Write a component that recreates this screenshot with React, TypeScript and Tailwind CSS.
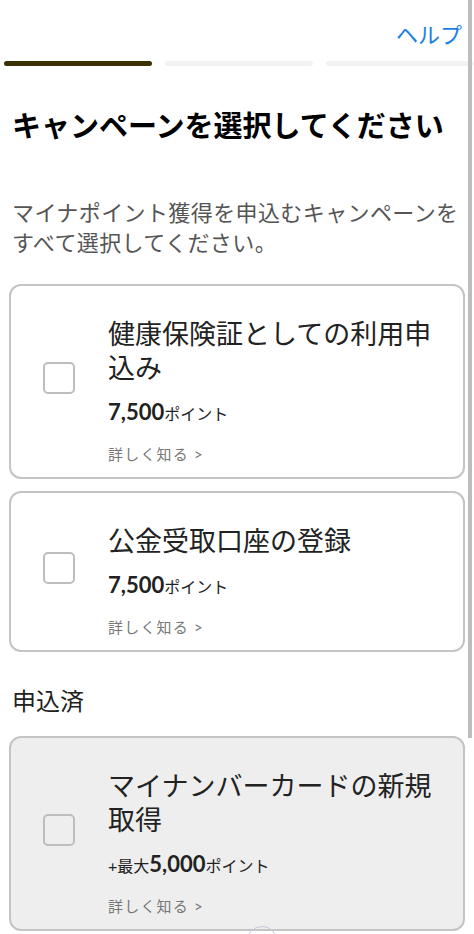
import React from "react";

type Campaign = {
  title: string;
  prefix?: string;
  points: string;
  done?: boolean;
};

const open: Campaign[] = [
  { title: "健康保険証としての利用申込み", points: "7,500" },
  { title: "公金受取口座の登録", points: "7,500" },
];

const applied: Campaign[] = [
  { title: "マイナンバーカードの新規取得", prefix: "+最大", points: "5,000", done: true },
];

function CampaignCard({ c }: { c: Campaign }) {
  return (
    <div
      className={
        "flex items-center rounded-[12px] border-2 border-[#c4c4c4] pl-[32px] pr-[20px] pt-[31px] pb-[12px] " +
        (c.done ? "bg-[#eeeeee]" : "bg-white")
      }
    >
      <div className="mb-[27px] h-[32px] w-[32px] shrink-0 rounded-[5px] border-2 border-[#bdbdbd] bg-transparent" />
      <div className="ml-[33px] flex flex-col">
        <div className="text-[27px] leading-[34px] text-[#222]">{c.title}</div>
        <div className="mt-[12px] flex items-baseline text-[#222]">
          {c.prefix && <span className="text-[16px]">{c.prefix}</span>}
          <span className="text-[22px] font-bold leading-[30px]">{c.points}</span>
          <span className="text-[16px]">ポイント</span>
        </div>
        <div className="mt-[16px] text-[15px] leading-[22px] tracking-[1.2px] text-[#777]">詳しく知る &gt;</div>
      </div>
    </div>
  );
}

export default function App() {
  return (
    <div
      className="relative min-h-[934px] w-full overflow-hidden bg-white"
      style={{ fontFamily: "Lato, 'Noto Sans CJK JP', 'Noto Sans', sans-serif" }}
    >
      <div className="flex justify-end pr-[12px] pt-[18px]">
        <span className="text-[22px] leading-[34px] text-[#1b7fe3]">ヘルプ</span>
      </div>

      <div className="mt-[9px] flex gap-[13px] pl-[4px]">
        <div className="h-[5px] flex-1 rounded-full bg-[#3a3000]" />
        <div className="h-[5px] flex-1 rounded-full bg-[#f2f2f2]" />
        <div className="h-[5px] flex-1 rounded-full bg-[#f2f2f2]" />
      </div>

      <h1 className="mt-[40px] px-[12px] text-[29px] font-bold leading-[40px] text-black">
        キャンペーンを選択してください
      </h1>

      <div className="mt-[52px] px-[12px]">
        <p className="w-[452px] text-[22px] leading-[30px] tracking-[0.4px] text-[#555]">
          マイナポイント獲得を申込むキャンペーンをすべて選択してください。
        </p>
      </div>

      <div className="mt-[26px] flex flex-col gap-[12px] px-[9px]">
        {open.map((c) => (
          <CampaignCard key={c.title} c={c} />
        ))}
      </div>

      <h2 className="mt-[32px] px-[12px] text-[24px] leading-[34px] text-[#222]">申込済</h2>

      <div className="mt-[18px] flex flex-col gap-[12px] px-[9px]">
        {applied.map((c) => (
          <CampaignCard key={c.title} c={c} />
        ))}
      </div>

      <div className="absolute right-[2px] top-0 h-[738px] w-[4px] bg-[#bdbdbd]" />
      <div className="absolute left-[246px] top-[926px] h-[32px] w-[32px] rounded-full border border-[#c8c8e0]" />
    </div>
  );
}
